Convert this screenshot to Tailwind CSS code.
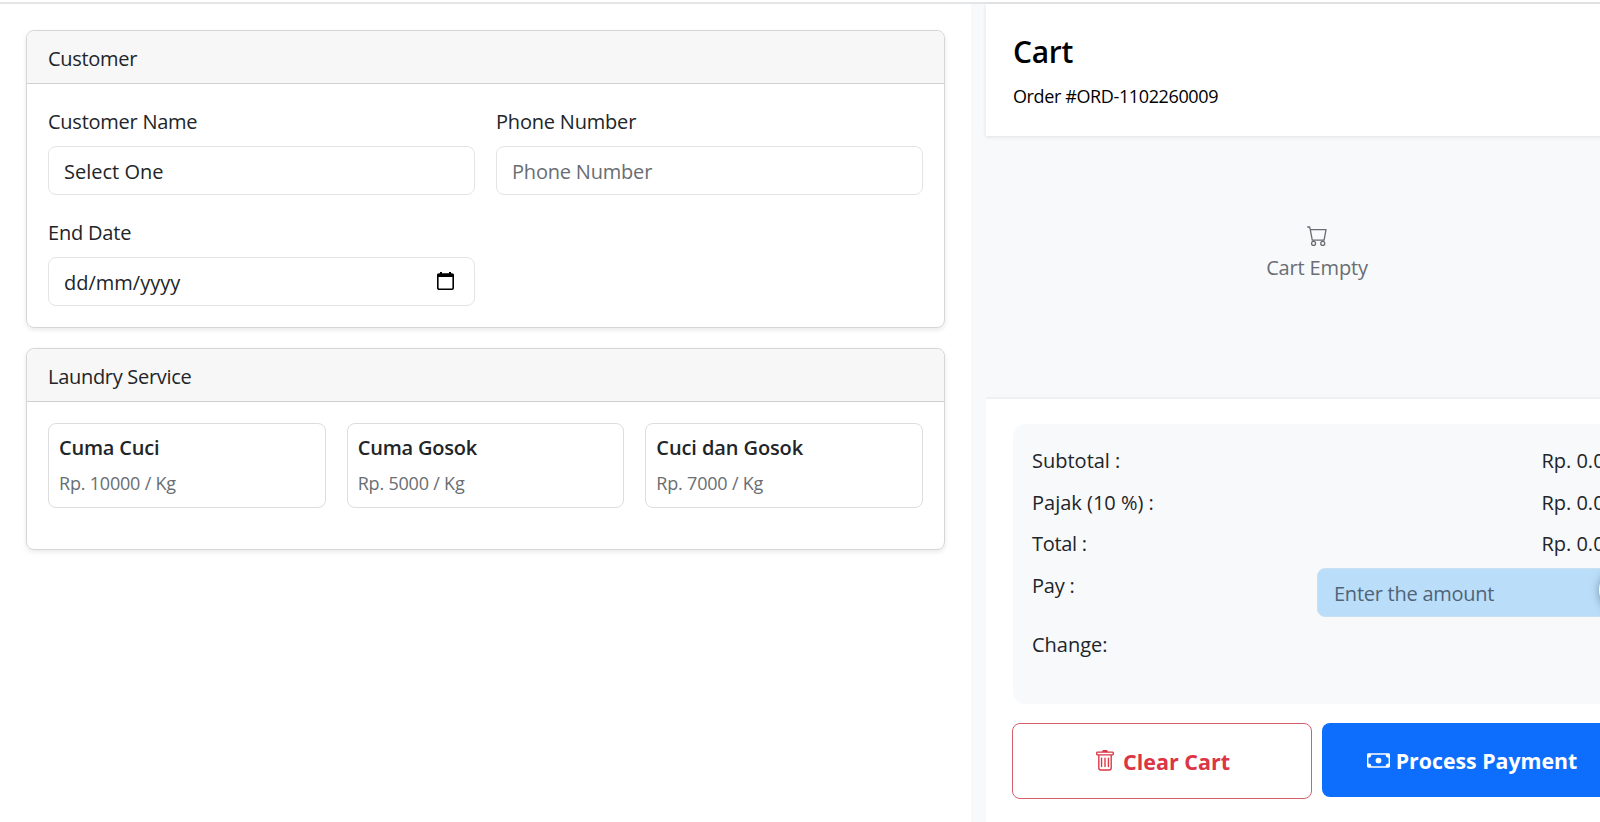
<!DOCTYPE html>
<html lang="en">
  <head>
    <meta charset="UTF-8" />
    <meta name="viewport" content="width=device-width, initial-scale=1.0" />
    <script src="https://cdn.jsdelivr.net/npm/@tailwindcss/browser@4"></script>
    <title>Transaction</title>
  </head>
  <body class="h-screen w-screen overflow-hidden bg-white font-['Open_Sans',sans-serif] text-xl text-[#212529]">
    <div class="flex h-full flex-col">
      <div class="mt-[2px] h-[2px] shrink-0 bg-[#e3e5e7]"></div>

      <div class="flex min-h-0 grow">
        <!-- Form -->
        <div class="w-[971px] shrink-0 px-[26px] pt-[26px]">
          <div class="h-[298px] rounded-lg border border-[#d5d6d7] shadow-[0_2px_5px_rgba(0,0,0,0.09)]">
            <div class="flex h-[53px] items-center rounded-t-lg border-b border-[#cfd0d1] bg-[#f7f7f7] px-[21px] pt-1 tracking-[-0.3px]">
              Customer
            </div>
            <div class="grid grid-cols-2 gap-x-[21px] px-[21px] pt-[22px]">
              <div class="h-[111px]">
                <p class="mb-2 h-8 leading-8 tracking-[-0.25px]">Customer Name</p>
                <div class="flex h-[49px] items-center rounded-lg border border-[#e2e5e8] px-[15px] pt-[3px]">Select One</div>
              </div>
              <div class="h-[111px]">
                <p class="mb-2 h-8 leading-8 tracking-[-0.2px]">Phone Number</p>
                <div class="flex h-[49px] items-center rounded-lg border border-[#e2e5e8] px-[15px] pt-[3px] tracking-[-0.2px] text-[#696e73]">Phone Number</div>
              </div>
              <div class="h-[111px]">
                <p class="mb-2 h-8 leading-8 tracking-[-0.2px]">End Date</p>
                <div class="flex h-[49px] items-center justify-between rounded-lg border border-[#e2e5e8] pr-5 pl-[15px]">
                  <span class="pt-[3px]">dd/mm/yyyy</span>
                  <svg class="mb-[2px] h-[18px] w-[17px]" viewBox="0 0 17 18">
                    <path d="M2 2h13a1.200 1.200 0 0 1 1.200 1.200v12.800a1.200 1.200 0 0 1-1.200 1.200H2A1.200 1.200 0 0 1 .8 16V3.200A1.200 1.200 0 0 1 2 2z" fill="none" stroke="#000" stroke-width="1.600" />
                    <path d="M.5 2h16v3H.5zM3 0h2v3H3zM12 0h2v3h-2z" fill="#000" />
                  </svg>
                </div>
              </div>
            </div>
          </div>

          <div class="mt-5 h-[202px] rounded-lg border border-[#d5d6d7] shadow-[0_2px_5px_rgba(0,0,0,0.09)]">
            <div class="flex h-[53px] items-center rounded-t-lg border-b border-[#cfd0d1] bg-[#f7f7f7] px-[21px] pt-1 tracking-[-0.3px]">
              Laundry Service
            </div>
            <div class="grid grid-cols-3 gap-[21px] p-[21px]">
              <div class="h-[85px] rounded-lg border border-[#dcdddf] px-[10px] pt-[9px]">
                <h6 class="h-[30px] leading-[30px] font-semibold tracking-[-0.2px]">Cuma Cuci</h6>
                <p class="mt-[6px] text-lg leading-7 tracking-[-0.2px] text-[#696e73]">Rp. 10000 / Kg</p>
              </div>
              <div class="h-[85px] rounded-lg border border-[#dcdddf] px-[10px] pt-[9px]">
                <h6 class="h-[30px] leading-[30px] font-semibold tracking-[-0.2px]">Cuma Gosok</h6>
                <p class="mt-[6px] text-lg leading-7 tracking-[-0.2px] text-[#696e73]">Rp. 5000 / Kg</p>
              </div>
              <div class="h-[85px] rounded-lg border border-[#dcdddf] px-[10px] pt-[9px]">
                <h6 class="h-[30px] leading-[30px] font-semibold tracking-[-0.1px]">Cuci dan Gosok</h6>
                <p class="mt-[6px] text-lg leading-7 tracking-[-0.2px] text-[#696e73]">Rp. 7000 / Kg</p>
              </div>
            </div>
          </div>
        </div>

        <!-- Cart -->
        <div class="flex w-[677px] shrink-0 flex-col bg-[#f8f9fb] pl-[15px]">
          <div class="h-[132px] shrink-0 bg-white px-[27px] pt-7 text-black shadow-[0_1px_4px_rgba(0,0,0,0.1)]">
            <h4 class="h-[38px] text-3xl leading-[39px] font-semibold tracking-[-0.3px]">Cart</h4>
            <p class="mt-3 text-lg leading-7 tracking-[-0.38px]">Order #ORD-1102260009</p>
          </div>
          <div class="flex h-[261px] shrink-0 flex-col items-center pt-[89px] text-[#696e73]">
            <svg class="h-[21px] w-[21px]" viewBox="0 0 16 16" fill="currentColor">
              <path d="M0 1.500A.5.5 0 0 1 .5 1H2a.5.5 0 0 1 .485.379L2.890 3H14.500a.5.5 0 0 1 .491.592l-1.500 8A.5.5 0 0 1 13 12H4a.5.5 0 0 1-.491-.408L2.010 3.607 1.610 2H.5a.5.5 0 0 1-.5-.5M3.102 4l1.313 7h8.170l1.313-7zM5 12a2 2 0 1 0 0 4 2 2 0 0 0 0-4m7 0a2 2 0 1 0 0 4 2 2 0 0 0 0-4m-7 1a1 1 0 1 1 0 2 1 1 0 0 1 0-2m7 0a1 1 0 1 1 0 2 1 1 0 0 1 0-2" />
            </svg>
            <p class="mt-[6px] leading-8 tracking-[-0.15px]">Cart Empty</p>
          </div>
          <div class="grow border-t-2 border-[#eef0f2] bg-white pt-[25px] pl-[27px]">
            <div class="h-[280px] rounded-xl bg-[#f8f9fb] pt-4 pr-[32px] pl-[19px]">
              <div class="flex h-[41.700px] justify-between leading-[42px]"><span>Subtotal :</span><span>Rp. 0.00</span></div>
              <div class="flex h-[41.700px] justify-between leading-[42px]"><span>Pajak (10 %) :</span><span>Rp. 0.00</span></div>
              <div class="flex h-[41.700px] justify-between leading-[42px]"><span class="tracking-[-0.3px]">Total :</span><span>Rp. 0.00</span></div>
              <div class="flex h-[59px] justify-between leading-[42px]">
                <span class="tracking-[-0.2px]">Pay :</span>
                <div class="mt-[3px] flex h-[49px] w-[299px] items-center rounded-lg border border-[#c9e0f3] bg-[#badefa] px-4 pt-[2px] tracking-[-0.25px] text-[#4f6478]">Enter the amount</div>
              </div>
              <div class="leading-[42px]">Change:</div>
            </div>
            <div class="mt-[19px] flex items-start gap-[10px]">
              <button class="-ml-px flex h-[76px] w-[300px] items-center justify-center gap-[7px] rounded-lg border border-[#d4606c] pt-[2px] text-[21.500px] font-bold text-[#dc3545]">
                <svg class="mb-[2px] h-[22px] w-[22px]" viewBox="0 0 16 16" fill="currentColor">
                  <path d="M5.500 5.500A.5.5 0 0 1 6 6v6a.5.5 0 0 1-1 0V6a.5.5 0 0 1 .5-.5m2.500 0a.5.5 0 0 1 .5.5v6a.5.5 0 0 1-1 0V6a.5.5 0 0 1 .5-.5m3 .5a.5.5 0 0 0-1 0v6a.5.5 0 0 0 1 0z" />
                  <path d="M14.500 3a1 1 0 0 1-1 1H13v9a2 2 0 0 1-2 2H5a2 2 0 0 1-2-2V4h-.5a1 1 0 0 1-1-1V2a1 1 0 0 1 1-1H6a1 1 0 0 1 1-1h2a1 1 0 0 1 1 1h3.500a1 1 0 0 1 1 1zM4.118 4 4 4.059V13a1 1 0 0 0 1 1h6a1 1 0 0 0 1-1V4.059L11.882 4zM2.500 3h11V2h-11z" />
                </svg>
                Clear Cart
              </button>
              <button class="flex h-[74px] w-[300px] items-center justify-center gap-[6px] rounded-lg bg-[#0d6efd] pt-[2px] text-[21.300px] font-bold text-white">
                <svg class="mb-[2px] h-[23px] w-[23px]" viewBox="0 0 16 16" fill="currentColor">
                  <path d="M8 10a2 2 0 1 0 0-4 2 2 0 0 0 0 4" />
                  <path d="M0 4a1 1 0 0 1 1-1h14a1 1 0 0 1 1 1v8a1 1 0 0 1-1 1H1a1 1 0 0 1-1-1zm3 0a2 2 0 0 1-2 2v4a2 2 0 0 1 2 2h10a2 2 0 0 1 2-2V6a2 2 0 0 1-2-2z" />
                </svg>
                Process Payment
              </button>
            </div>
          </div>
        </div>
      </div>
    </div>

    <!-- floating button -->
    <div class="absolute top-[568px] left-[1599px] h-[44px] w-[44px] rounded-full bg-white shadow-[0_1px_10px_rgba(0,0,0,0.35)]"></div>
  </body>
</html>
